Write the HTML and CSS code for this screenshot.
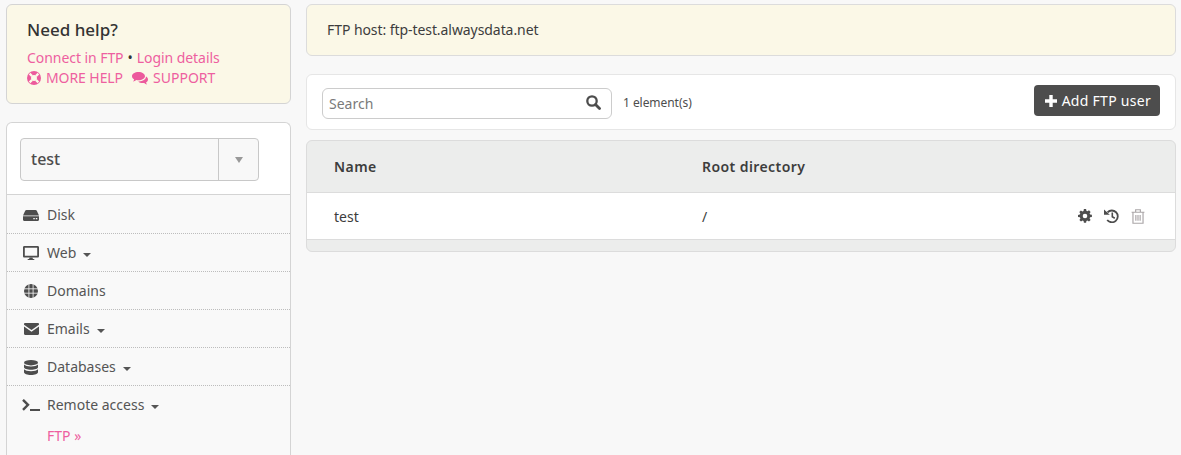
FILE: index.html
```html
<!DOCTYPE html>
<html lang="en">
<head>
<meta charset="utf-8">
<title>FTP users</title>
<link rel="stylesheet" href="styles.css">
</head>
<body>
<div class="page">
  <aside class="sidebar">
    <section class="help">
      <h3>Need help?</h3>
      <p class="help-line tight"><a>Connect in FTP</a> <span class="dot">•</span> <a>Login details</a></p>
      <p class="help-line">
        <a class="ico-link narrow"><svg class="ring" viewBox="0 0 16 16"><circle cx="8" cy="8" r="8" fill="#ec5a9c"/><circle cx="8" cy="8" r="3.400" fill="#fbf8e7"/><circle cx="8" cy="8" r="5.200" fill="none" stroke="#ec5a9c" stroke-width="3"/><path d="M3 3l2.800 2.800M13 3l-2.800 2.800M3 13l2.800-2.800M13 13l-2.800-2.800" stroke="#fbf8e7" stroke-width="2.600"/></svg>MORE HELP</a>
        <a class="ico-link second"><svg class="bubbles" viewBox="0 0 16 13"><path d="M6.500 0C2.900 0 0 1.800 0 4.200c0 1.300.8 2.400 2.200 3.200-.2.800-.6 1.500-1.200 2 1.300-.2 2.400-.7 3.300-1.400.7.100 1.400.2 2.200.2 3.600 0 6.500-1.800 6.500-4S10.100 0 6.500 0z" fill="#ec5a9c"/><path d="M14 4.600c0 2.900-3.200 4.900-7 4.900h-.8c1 1 2.600 1.600 4.500 1.600.5 0 1-.1 1.500-.1.800.7 1.700 1.200 2.800 1.400-.4-.5-.8-1.100-1-1.800 1.200-.7 2-1.800 2-3 0-1.200-.8-2.300-2-3z" fill="#ec5a9c"/></svg>SUPPORT</a>
      </p>
    </section>
    <nav class="menu-card">
      <div class="picker-wrap">
        <div class="picker">
          <span class="picker-value">test</span>
          <span class="picker-btn"><span class="caret-grey"></span></span>
        </div>
      </div>
      <ul class="menu">
        <li><span class="mi"><svg class="m-disk" viewBox="0 0 16 11"><path d="M3.500 0h9c.6 0 1 .3 1.300.8L16 5.400H0L2.200.8C2.500.3 2.900 0 3.500 0z" fill="#4d4d4d"/><path d="M0 6.200h16v3.600c0 .7-.5 1.200-1.200 1.200H1.200C.5 11 0 10.500 0 9.800z" fill="#4d4d4d"/><path d="M10.300 8.600h1.500M12.800 8.600h1.500" stroke="#f9f9f9" stroke-width="1.300"/></svg></span>Disk</li>
        <li><span class="mi"><svg class="m-desk" viewBox="0 0 16 14"><path d="M1.300 0h13.400c.7 0 1.300.6 1.300 1.300v8.900c0 .7-.6 1.300-1.300 1.300H1.300C.6 11.500 0 10.900 0 10.200V1.300C0 .6.600 0 1.300 0zm.5 1.800v7.900h12.400V1.800z" fill="#4d4d4d" fill-rule="evenodd"/><path d="M6.500 11.500h3l.4 1.500h1.400v1H4.700v-1h1.400z" fill="#4d4d4d"/></svg></span>Web<span class="caret"></span></li>
        <li><span class="mi"><svg class="m-globe" viewBox="0 0 14 14"><circle cx="7" cy="7" r="7" fill="#4d4d4d"/><path d="M0 4.800h14M0 9.200h14M4.900 0v14M9.100 0v14" stroke="#f9f9f9" stroke-width=".8" fill="none"/></svg></span>Domains</li>
        <li><span class="mi"><svg class="m-mail" viewBox="0 0 15 12"><path d="M1.200 0h12.600C14.500 0 15 .5 15 1.200v.6L7.500 7 0 1.800v-.6C0 .5.500 0 1.200 0z" fill="#4d4d4d"/><path d="M0 3.400L7.500 8.700 15 3.400v7.400c0 .7-.5 1.200-1.200 1.200H1.200C.5 12 0 11.500 0 10.800z" fill="#4d4d4d"/></svg></span>Emails<span class="caret"></span></li>
        <li><span class="mi"><svg class="m-db" viewBox="0 0 14 15"><ellipse cx="7" cy="2.700" rx="7" ry="2.700" fill="#4d4d4d"/><path d="M0 4.500c1 1.300 3.800 2 7 2s6-.7 7-2v2.800c0 1.400-3.100 2.500-7 2.500S0 8.700 0 7.300z" fill="#4d4d4d"/><path d="M0 9.200c1 1.300 3.800 2 7 2s6-.7 7-2v3.100c0 1.500-3.100 2.700-7 2.700S0 13.800 0 12.300z" fill="#4d4d4d"/></svg></span>Databases<span class="caret"></span></li>
        <li class="open"><span class="mi"><svg class="m-term" viewBox="0 0 18 12"><path d="M1 .8l5 5-5 5" fill="none" stroke="#4d4d4d" stroke-width="2.400"/><path d="M8 11h10" stroke="#4d4d4d" stroke-width="2"/></svg></span>Remote access<span class="caret"></span>
          <a class="sub">FTP »</a>
        </li>
      </ul>
    </nav>
  </aside>
  <main class="content">
    <section class="host">FTP host: ftp-test.alwaysdata.net</section>
    <section class="toolbar">
      <div class="search"><span class="placeholder">Search</span><svg class="s-ico" viewBox="0 0 15 15"><circle cx="6" cy="6" r="4.700" fill="none" stroke="#4d4d4d" stroke-width="2.300"/><path d="M9.500 9.500l4 4" stroke="#4d4d4d" stroke-width="2.800" stroke-linecap="round"/></svg></div>
      <span class="count">1 element(s)</span>
      <a class="add"><svg class="i12" viewBox="0 0 12 12"><path d="M6 0v12M0 6h12" stroke="#fff" stroke-width="3.400"/></svg>Add FTP user</a>
    </section>
    <section class="table">
      <div class="thead"><span class="col-name">Name</span><span class="col-root">Root directory</span></div>
      <div class="trow">
        <span class="col-name">test</span><span class="col-root">/</span>
        <span class="actions">
          <svg class="a-gear" viewBox="0 0 14 14"><path d="M5.900 0h2.200l.3 1.800 1.100.5 1.500-1 1.600 1.600-1 1.500.5 1.100 1.800.3v2.200l-1.800.3-.5 1.100 1 1.500-1.600 1.600-1.500-1-1.100.5-.3 1.800H5.900l-.3-1.800-1.100-.5-1.500 1-1.600-1.600 1-1.500-.5-1.100L0 8.100V5.900l1.800-.3.5-1.100-1-1.500 1.600-1.600 1.500 1 1.100-.5z" fill="#4d4d4d"/><circle cx="7" cy="7" r="2.300" fill="#fff"/></svg>
          <svg class="a-hist" viewBox="0 0 15 14"><path d="M3.500 3.400A5.900 5.900 0 1 1 3.200 11" fill="none" stroke="#4d4d4d" stroke-width="1.800"/><path d="M0 .5l5.800 5.300H0z" fill="#4d4d4d"/><path d="M8.300 3.500v4.200l2.500 1.500" fill="none" stroke="#4d4d4d" stroke-width="1.600"/></svg>
          <svg class="a-trash" viewBox="0 0 13 14"><path d="M.5 3h12M4.300 3V.7h4.400V3M1.800 3v10.300h9.400V3M4.500 5.500v5.500M6.500 5.500v5.500M8.500 5.500v5.500" fill="none" stroke="#aba6a8" stroke-width="1.100"/></svg>
        </span>
      </div>
      <div class="tfoot"></div>
    </section>
  </main>
</div>
</body>
</html>
```

FILE: styles.css
```css
* { box-sizing: border-box; }
html, body { margin: 0; height: 100%; overflow: hidden; }
body {
  background: #f8f8f8;
  color: #4d4d4d;
  font-family: "Noto Sans", sans-serif;
  font-size: 14px;
  line-height: 20px;
}
a { color: #ee5fa0; text-decoration: none; }
svg { display: block; flex: none; }
.i12 { width: 12px; height: 12px; }
.ring { width: 14px; height: 14px; }
.bubbles { width: 16px; height: 13px; }
.m-disk { width: 16px; height: 11px; }
.m-desk { width: 16px; height: 14px; }
.m-globe { width: 14px; height: 14px; }
.m-mail { width: 15px; height: 12px; }
.m-db { width: 14px; height: 15px; }
.m-term { width: 18px; height: 12px; }
.s-ico { width: 15px; height: 15px; }
.a-gear { width: 14px; height: 14px; }
.a-hist { width: 15px; height: 14px; }
.a-trash { width: 14px; height: 15px; }

.page { display: flex; align-items: flex-start; gap: 15px; padding: 4px 5px 0 6px; height: 455px; }
.sidebar { width: 285px; flex: none; display: flex; flex-direction: column; gap: 18px; }
.content { flex: 1; min-width: 0; display: flex; flex-direction: column; }

.help {
  height: 100px;
  background: #fbf8e7;
  border: 1px solid #d4d4d4;
  border-radius: 6px;
  padding: 11px 20px 0;
}
.help h3 { margin: 0 0 4px; font-size: 17px; line-height: 28px; font-weight: 500; color: #333; }
.help-line { margin: 0; display: flex; align-items: center; gap: 4px; white-space: pre; }
.tight { letter-spacing: -0.06px; }
.narrow { letter-spacing: -0.08px; }
.dot { color: #333; }
.ico-link { display: inline-flex; align-items: center; gap: 5px; }
.second { margin-left: 5px; }

.menu-card {
  background: #fff;
  border: 1px solid #d4d4d4;
  border-bottom: 0;
  border-radius: 6px 6px 0 0;
  height: 333px;
  display: flex;
  flex-direction: column;
}
.picker-wrap { padding: 15px 31px 13px 13px; }
.picker {
  display: flex;
  height: 43px;
  background: #f8f8f8;
  border: 1px solid #c8c8c8;
  border-radius: 4px;
}
.picker-value { flex: 1; padding-left: 10px; font-size: 16px; line-height: 40px; font-weight: 500; }
.picker-btn { width: 40px; border-left: 1px solid #c8c8c8; display: flex; align-items: center; justify-content: center; }
.caret-grey { width: 0; height: 0; border: 4.500px solid transparent; border-top: 6px solid #999; border-bottom: 0; }

.menu { list-style: none; margin: 0; padding: 0; background: #f9f9f9; border-top: 1px solid #d4d4d4; flex: 1; }
.menu li {
  height: 38px;
  padding-left: 40px;
  line-height: 37px;
  position: relative;
  border-bottom: 1px dotted #bdbdbd;
  color: #555;
}
.menu li:first-child { height: 39px; line-height: 39px; }
.menu li.open { border-bottom: 0; height: 69px; }
.mi { position: absolute; left: 14px; top: 0; width: 20px; height: 38px; display: flex; align-items: center; justify-content: center; }
.menu li:first-child .mi { height: 40px; }
.caret { display: inline-block; width: 0; height: 0; margin-left: 7px; vertical-align: 1px; border: 4px solid transparent; border-top: 4px solid #555; border-bottom: 0; }
.sub { display: block; line-height: 24px; margin-top: 1px; }

.host {
  height: 52px;
  background: #fbf8e7;
  border: 1px solid #dcdcdc;
  border-radius: 6px;
  padding: 0 20px;
  line-height: 50px;
  color: #3d3d3d;
  letter-spacing: -0.07px;
}
.toolbar {
  margin-top: 18px;
  height: 56px;
  background: #fff;
  border: 1px solid #e6e6e6;
  border-radius: 6px;
  display: flex;
  align-items: flex-start;
  padding: 10px 15px 0;
}
.search {
  margin-top: 3px;
  width: 290px;
  height: 31px;
  border: 1px solid #ccc;
  border-radius: 6px;
  display: flex;
  align-items: center;
  justify-content: space-between;
  padding: 0 10px 2px 6px;
}
.placeholder { color: #7a7a7a; padding-top: 2px; }
.count { margin: 8px 0 0 11px; font-size: 12px; line-height: 20px; letter-spacing: -0.05px; }
.add {
  margin-left: auto;
  height: 31px;
  background: #4d4d4d;
  color: #fff;
  border-radius: 4px;
  display: flex;
  align-items: center;
  gap: 5px;
  padding: 0 9px 0 11px;
  line-height: 30px;
  letter-spacing: .28px;
}
.table {
  margin-top: 10px;
  height: 112px;
  background: #ecedec;
  border: 1px solid #dcdcdc;
  border-radius: 6px;
  display: flex;
  flex-direction: column;
  overflow: hidden;
}
.thead { height: 51px; display: flex; align-items: center; font-weight: 600; color: #3d3d3d; letter-spacing: .42px; }
.trow { height: 48px; background: #fff; border-top: 1px solid #dcdcdc; border-bottom: 1px solid #dcdcdc; display: flex; align-items: center; color: #3d3d3d; padding-top: 2px; }
.col-name { width: 395px; padding-left: 27px; flex: none; }
.col-root { flex: 1; }
.actions { display: flex; align-items: center; gap: 12px; padding-right: 30px; margin-top: -2px; }
.tfoot { flex: 1; }
```
